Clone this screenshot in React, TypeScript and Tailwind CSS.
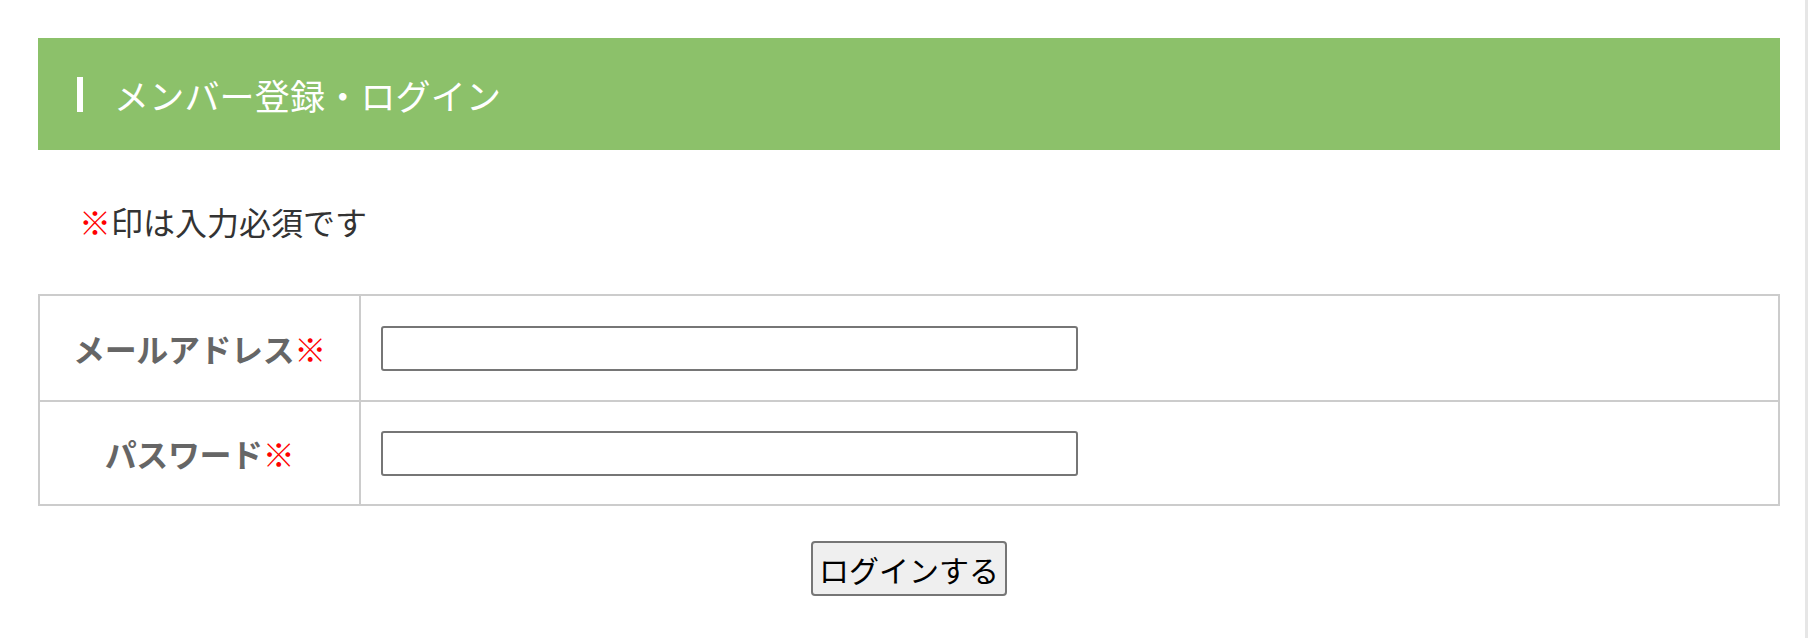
const jp = { fontFamily: '"Noto Sans CJK JP", "Noto Sans", sans-serif' };

function Req() {
  return <span className="text-[#ff0000]">※</span>;
}

function Row({ label, type, first }: { label: string; type: string; first?: boolean }) {
  return (
    <div className={`grid grid-cols-[321px_1fr] h-[104px] ${first ? '' : 'border-t-2 border-[#cccccc]'}`}>
      <div className="flex items-center justify-center border-r-2 border-[#cccccc] text-[32px] font-bold text-[#666666] tracking-[-0.4px]">
        {label}
        <Req />
      </div>
      <div className="flex items-center pl-[20px]">
        <input
          type={type}
          className="w-[697px] h-[45px] border-2 border-[#767676] rounded-[3px] bg-white px-2 outline-none"
        />
      </div>
    </div>
  );
}

export default function App() {
  return (
    <div className="flex w-full h-[638px] bg-white" style={jp}>
      <div className="flex-1">
        <div className="ml-[38px] w-[1742px] pt-[38px]">
          <div className="flex items-center h-[112px] bg-[#8cc16a] pl-[39px]">
            <span className="w-[6px] h-[35px] bg-white" />
            <h1 className="ml-[31px] text-[35px] leading-none text-white tracking-[0.2px]">
              メンバー登録・ログイン
            </h1>
          </div>

          <p className="mt-[48px] pl-[41px] text-[32px] leading-[46px] text-[#333333]">
            <Req />印は入力必須です
          </p>

          <div className="mt-[50px] border-2 border-[#cccccc]">
            <Row label="メールアドレス" type="email" first />
            <Row label="パスワード" type="password" />
          </div>

          <div className="flex justify-center mt-[35px]">
            <button className="w-[196px] h-[55px] border-2 border-[#767676] rounded-[4px] bg-[#efefef] text-[30px] leading-none text-black">
              ログインする
            </button>
          </div>
        </div>
      </div>
      <div className="w-[3px] bg-[#e6e6e6]" />
    </div>
  );
}
